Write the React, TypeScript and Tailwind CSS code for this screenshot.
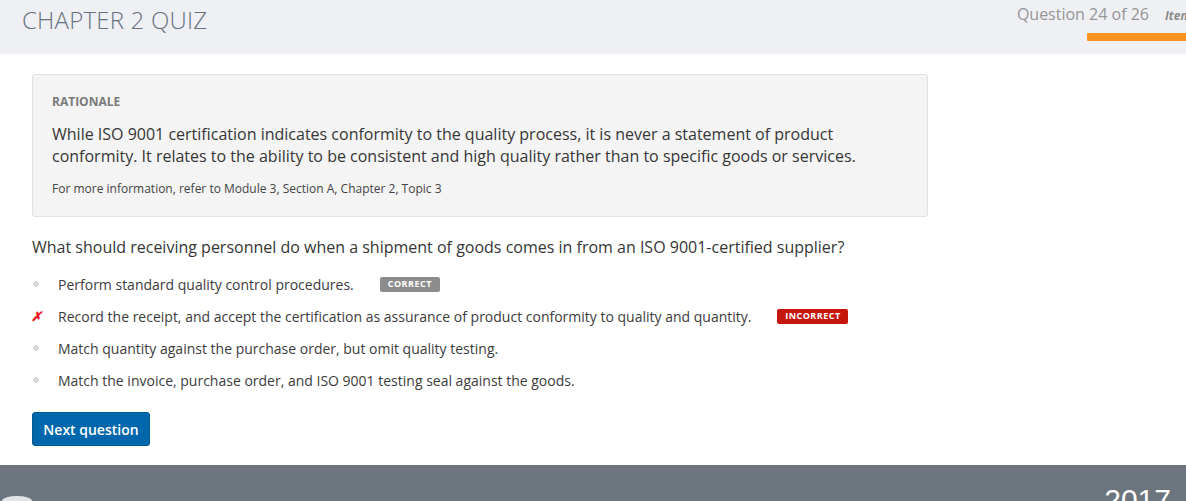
import React from "react";

const options = [
  { text: "Perform standard quality control procedures.", badge: "correct" },
  { text: "Record the receipt, and accept the certification as assurance of product conformity to quality and quantity.", badge: "incorrect", picked: true },
  { text: "Match quantity against the purchase order, but omit quality testing." },
  { text: "Match the invoice, purchase order, and ISO 9001 testing seal against the goods." },
];

const Dot: React.FC = () => (
  <svg width="8" height="8" viewBox="0 0 8 8" className="block">
    <path d="M4 1 L7 4 L4 7 L1 4 Z" fill="#dcdcdc" stroke="#cfcfcf" strokeWidth="1" />
  </svg>
);

const App: React.FC = () => {
  return (
    <div className="w-[1186px] h-[501px] overflow-hidden bg-white font-['Open_Sans',sans-serif] text-[#333]">
      {/* Header */}
      <div className="h-[54px] bg-[#eff0f4] flex justify-between">
        <h1 className="pl-[22px] pt-[4px] text-[24px] font-light text-[#66727f] tracking-[0.2px] leading-[32px]">
          CHAPTER 2 QUIZ
        </h1>
        <div className="flex flex-col items-end">
          <div className="flex items-baseline gap-4 pt-[3px] whitespace-nowrap">
            <span className="text-[16px] text-[#959595] leading-[22px]">Question 24 of 26</span>
            <span className="text-[12px] italic font-bold text-[#8a8a8a] w-[21px] overflow-hidden">Item</span>
          </div>
          <div className="mt-[8px] h-[8px] w-[99px] bg-[#f7931e] rounded-l-[1px]"></div>
        </div>
      </div>

      {/* Rationale */}
      <div className="ml-[32px] mt-[20px] w-[896px] h-[143px] bg-[#f4f4f4] border border-[#e2e2e2] rounded-[3px] pl-[19px] pt-[19px]">
        <div className="text-[12px] font-bold text-[#7a7a7a] leading-[16px]">RATIONALE</div>
        <p className="mt-[13px] text-[16px] leading-[22px] text-[#363636] w-[820px]">
          While ISO 9001 certification indicates conformity to the quality process, it is never a statement of product conformity. It relates to the ability to be consistent and high quality rather than to specific goods or services.
        </p>
        <p className="mt-[14px] text-[12px] leading-[16px] text-[#444]">
          For more information, refer to Module 3, Section A, Chapter 2, Topic 3
        </p>
      </div>

      {/* Question */}
      <div className="ml-[32px] mt-[19px] text-[16px] leading-[22px] text-[#363636]">
        What should receiving personnel do when a shipment of goods comes in from an ISO 9001-certified supplier?
      </div>

      <ul className="ml-[32px] mt-[16px] flex flex-col gap-[12px]">
        {options.map((o, i) => (
          <li key={i} className="flex items-center h-[20px] text-[14px] text-[#3c3c3c]">
            <span className="w-[26px] flex items-center">
              {o.picked ? (
                <span className="text-[#e8141b] text-[13px] font-bold italic leading-none ml-[-1px]">✗</span>
              ) : (
                <Dot />
              )}
            </span>
            <span>{o.text}</span>
            {o.badge === "correct" && (
              <span className="ml-[26px] h-[15px] w-[60px] justify-center bg-[#8c8c8c] rounded-[2px] text-white text-[9px] font-bold tracking-[0.5px] flex items-center">
                CORRECT
              </span>
            )}
            {o.badge === "incorrect" && (
              <span className="ml-[26px] h-[15px] w-[71px] justify-center bg-[#c5160c] rounded-[2px] text-white text-[9px] font-bold tracking-[0.5px] flex items-center">
                INCORRECT
              </span>
            )}
          </li>
        ))}
      </ul>

      <button className="ml-[32px] mt-[22px] h-[34px] w-[118px] bg-[#0067ac] border border-[#005a97] rounded-[3px] text-white text-[14px] font-semibold">
        Next question
      </button>

      {/* Footer */}
      <div className="mt-[19px] h-[40px] bg-[#6c757d] relative flex justify-end">
        <div className="absolute left-[2px] top-[31px] w-[30px] h-[10px] rounded-[50%] bg-white/80"></div>
        <span className="mr-[15px] mt-[20px] text-white text-[30px] font-['Liberation_Sans',sans-serif] leading-[30px]">2017</span>
      </div>
    </div>
  );
};

export default App;
